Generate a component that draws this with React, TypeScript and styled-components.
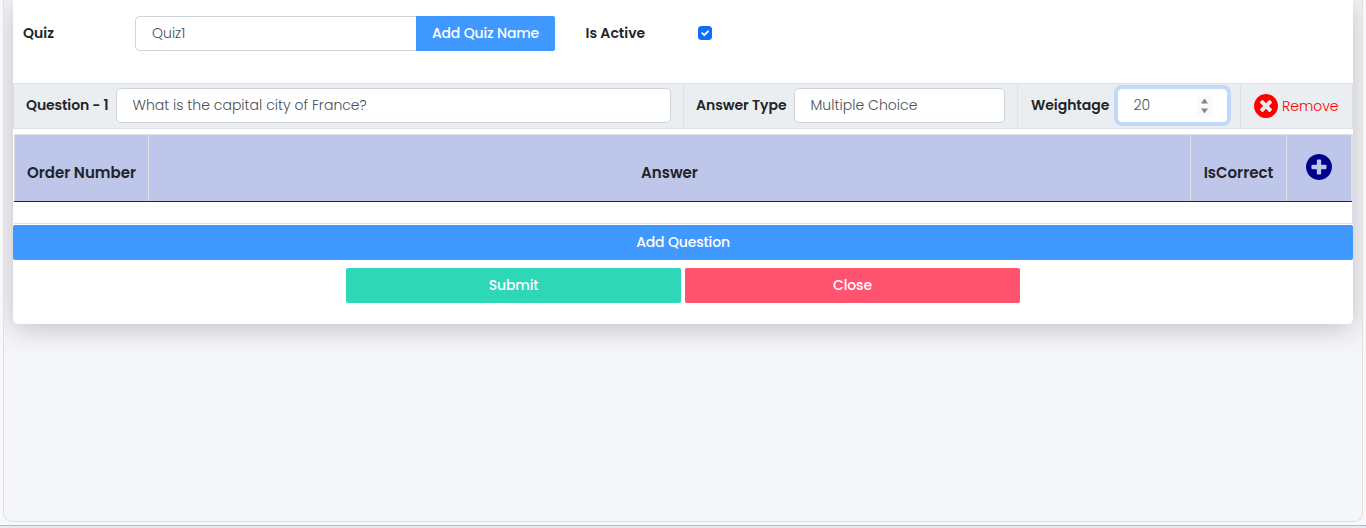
import React from "react";
import styled, { createGlobalStyle } from "styled-components";

const GlobalStyle = createGlobalStyle`
  *, *::before, *::after { box-sizing: border-box; }
  html, body { margin: 0; height: 528px; overflow: hidden; }
  body {
    background: #f8f8f8;
    color: #212529;
    font: 400 14px/21px Poppins, Inter, "Open Sans", sans-serif;
  }
`;

const Page = styled.div`
  height: 528px;
  display: flex;
  flex-direction: column;
  justify-content: space-between;
`;

const Panel = styled.main`
  height: 522px;
  margin: 0 3px;
  padding: 0 9px;
  overflow: hidden;
  background: #f5f6fa;
  border: 1px solid #dedfe1;
  border-top: 0;
  border-radius: 0 0 9px 9px;
`;

const Taskbar = styled.div`
  height: 3px;
  background: #e0ecf8;
  border-top: 1px solid #b3bcc6;
`;

const Card = styled.section`
  height: 324px;
  background: #fff;
  border-radius: 0 0 5px 5px;
  box-shadow: 0 4px 28px rgba(35, 25, 40, 0.25);
`;

const QuizRow = styled.div`
  display: flex;
  align-items: center;
  height: 83px;
  padding: 16px 10px 32px;
`;

const Text = styled.span<{ $spacing?: number }>`
  display: inline-block;
  white-space: nowrap;
  letter-spacing: ${(p) => p.$spacing ?? 0}px;
`;

const Label = styled(Text)<{ $width: number; $indent?: number }>`
  flex: none;
  width: ${(p) => p.$width}px;
  padding-left: ${(p) => p.$indent ?? 0}px;
  font-weight: 600;
`;

const Field = styled.div<{ $width: number; $joined?: boolean; $focused?: boolean }>`
  display: flex;
  align-items: center;
  justify-content: space-between;
  flex: none;
  width: ${(p) => p.$width}px;
  height: 35px;
  padding: 0 ${(p) => (p.$focused ? 15 : 20)}px 0 ${(p) => (p.$joined ? 16 : 15.5)}px;
  color: #495057;
  font-weight: 300;
  background: #fff;
  border: 1px solid ${(p) => (p.$focused ? "#c0d9f8" : "#ced4da")};
  border-right-width: ${(p) => (p.$joined ? 0 : 1)}px;
  border-radius: ${(p) => (p.$joined ? "5px 0 0 5px" : "5px")};
  box-shadow: ${(p) => (p.$focused ? "0 0 0 3px #c0d9f8" : "none")};
`;

const Button = styled.button<{ $color: string; $width?: number; $joined?: boolean }>`
  flex: none;
  width: ${(p) => (p.$width ? `${p.$width}px` : "100%")};
  height: 35px;
  padding: 0;
  color: #fff;
  font: inherit;
  font-weight: 500;
  letter-spacing: -0.15px;
  background: ${(p) => p.$color};
  border: 0;
  border-radius: ${(p) => (p.$joined ? "0 2px 2px 0" : "2px")};

  ${Text} { letter-spacing: inherit; }
`;

const Checkbox = styled.span`
  display: flex;
  width: 14px;
  height: 14px;
  margin-bottom: 1px;
  background: #0d6efd;
  border-radius: 3.5px;
`;

const QuestionRow = styled.div`
  display: flex;
  height: 46px;
  background: #ebeef1;
  border: solid #dee2e6;
  border-width: 1px 1px 1px 0;
`;

const QuestionCell = styled.div<{ $width?: number; $left: number }>`
  display: flex;
  align-items: center;
  flex: ${(p) => (p.$width ? "none" : 1)};
  width: ${(p) => p.$width ?? 0}px;
  padding-left: ${(p) => p.$left}px;
  padding-bottom: 1px;
  border-left: 1px solid #dee2e6;
`;

const Spinner = styled.span`
  display: flex;
  width: 15px;
  height: 20px;
  background: #fafafa;
`;

const Remove = styled.span`
  display: flex;
  align-items: center;
  gap: 3.6px;
  padding: 1px 0 0 0.4px;
  color: red;
  font-weight: 300;
`;

const AnswerTable = styled.div`
  height: 90px;
  margin: 5px 0 1px 1px;
  border: solid #dee2e6;
  border-width: 1px 1px 1px 0;
`;

const HeaderRow = styled.div`
  display: grid;
  grid-template-columns: 134px 1fr 96px 66px;
  height: 67px;
  background: #bec6e9;
  border-bottom: 1px solid #212529;
`;

const HeaderCell = styled.div<{ $icon?: boolean }>`
  display: flex;
  justify-content: center;
  align-items: center;
  padding-top: ${(p) => (p.$icon ? 0 : 9)}px;
  padding-bottom: ${(p) => (p.$icon ? 2 : 0)}px;
  border-left: 1px solid #dee2e6;
  font-size: 15px;
  font-weight: 600;

  &:last-child { border-right: 1px solid #dee2e6; }
`;

const Actions = styled.div`
  display: flex;
  justify-content: center;
  gap: 4px;
  padding: 8px 0 0;
`;

const RemoveIcon = () => (
  <svg width="24" height="24" viewBox="0 128 1536 1536" fill="currentColor">
    <path d="M1149 1122q0-26-19-45L949 896l181-181q19-19 19-45 0-27-19-46l-90-90q-19-19-46-19-26 0-45 19L768 715 587 534q-19-19-45-19-27 0-46 19l-90 90q-19 19-19 46 0 26 19 45l181 181-181 181q-19 19-19 45 0 27 19 46l90 90q19 19 46 19 26 0 45-19l181-181 181 181q19 19 45 19 27 0 46-19l90-90q19-19 19-46zm387-226q0 209-103 385.5t-279.5 279.5-385.5 103-385.5-103-279.5-279.5-103-385.5 103-385.5 279.5-279.5 385.5-103 385.5 103 279.5 279.5 103 385.5z" />
  </svg>
);

const AddIcon = () => (
  <svg width="26" height="26" viewBox="0 0 1536 1536" fill="#00008b">
    <path d="M1216 832V704q0-26-19-45t-45-19H896V384q0-26-19-45t-45-19H704q-26 0-45 19t-19 45v256H384q-26 0-45 19t-19 45v128q0 26 19 45t45 19h256v256q0 26 19 45t45 19h128q26 0 45-19t19-45V896h256q26 0 45-19t19-45zm320-64q0 209-103 385.5t-279.5 279.5-385.5 103-385.5-103-279.5-279.5-103-385.5 103-385.5 279.5-279.5 385.5-103 385.5 103 279.5 279.5 103 385.5z" />
  </svg>
);

export default function App() {
  return (
    <Page>
      <GlobalStyle />
      <Panel>
        <Card>
          <QuizRow>
            <Label $width={112}>Quiz</Label>
            <Field $width={281} $joined><Text>Quiz1</Text></Field>
            <Button $color="#4099ff" $width={139} $joined><Text>Add Quiz Name</Text></Button>
            <Label $width={143} $indent={30.5}>Is Active</Label>
            <Checkbox>
              <svg width="14" height="14" viewBox="0 0 14 14" fill="none">
                <path d="M4.2 7.2 6.2 9.2 10 5.3" stroke="#fff" strokeWidth="1.9" strokeLinecap="round" strokeLinejoin="round" />
              </svg>
            </Checkbox>
          </QuizRow>
          <QuestionRow>
            <QuestionCell $width={670} $left={12}>
              <Label $width={90} $spacing={-0.12}>Question - 1</Label>
              <Field $width={555}><Text $spacing={0.02}>What is the capital city of France?</Text></Field>
            </QuestionCell>
            <QuestionCell $width={334} $left={12}>
              <Label $width={98} $spacing={-0.05}>Answer Type</Label>
              <Field $width={211}><Text $spacing={0.04}>Multiple Choice</Text></Field>
            </QuestionCell>
            <QuestionCell $width={223} $left={13}>
              <Label $width={86} $spacing={-0.05}>Weightage</Label>
              <Field $width={111} $focused>
                <Text>20</Text>
                <Spinner>
                  <svg width="15" height="20" viewBox="0 0 15 20" fill="#858585">
                    <path d="M4 7.5 7.5 2.5 11 7.5zM4 12.5 7.5 17.5 11 12.5z" />
                  </svg>
                </Spinner>
              </Field>
            </QuestionCell>
            <QuestionCell $left={13}>
              <Remove><RemoveIcon /><Text>Remove</Text></Remove>
            </QuestionCell>
          </QuestionRow>
          <AnswerTable>
            <HeaderRow>
              <HeaderCell><Text>Order Number</Text></HeaderCell>
              <HeaderCell><Text>Answer</Text></HeaderCell>
              <HeaderCell><Text>IsCorrect</Text></HeaderCell>
              <HeaderCell $icon><AddIcon /></HeaderCell>
            </HeaderRow>
          </AnswerTable>
          <Button $color="#4099ff"><Text>Add Question</Text></Button>
          <Actions>
            <Button $color="#2ed8b6" $width={335}><Text>Submit</Text></Button>
            <Button $color="#ff5370" $width={335}><Text>Close</Text></Button>
          </Actions>
        </Card>
      </Panel>
      <Taskbar />
    </Page>
  );
}
